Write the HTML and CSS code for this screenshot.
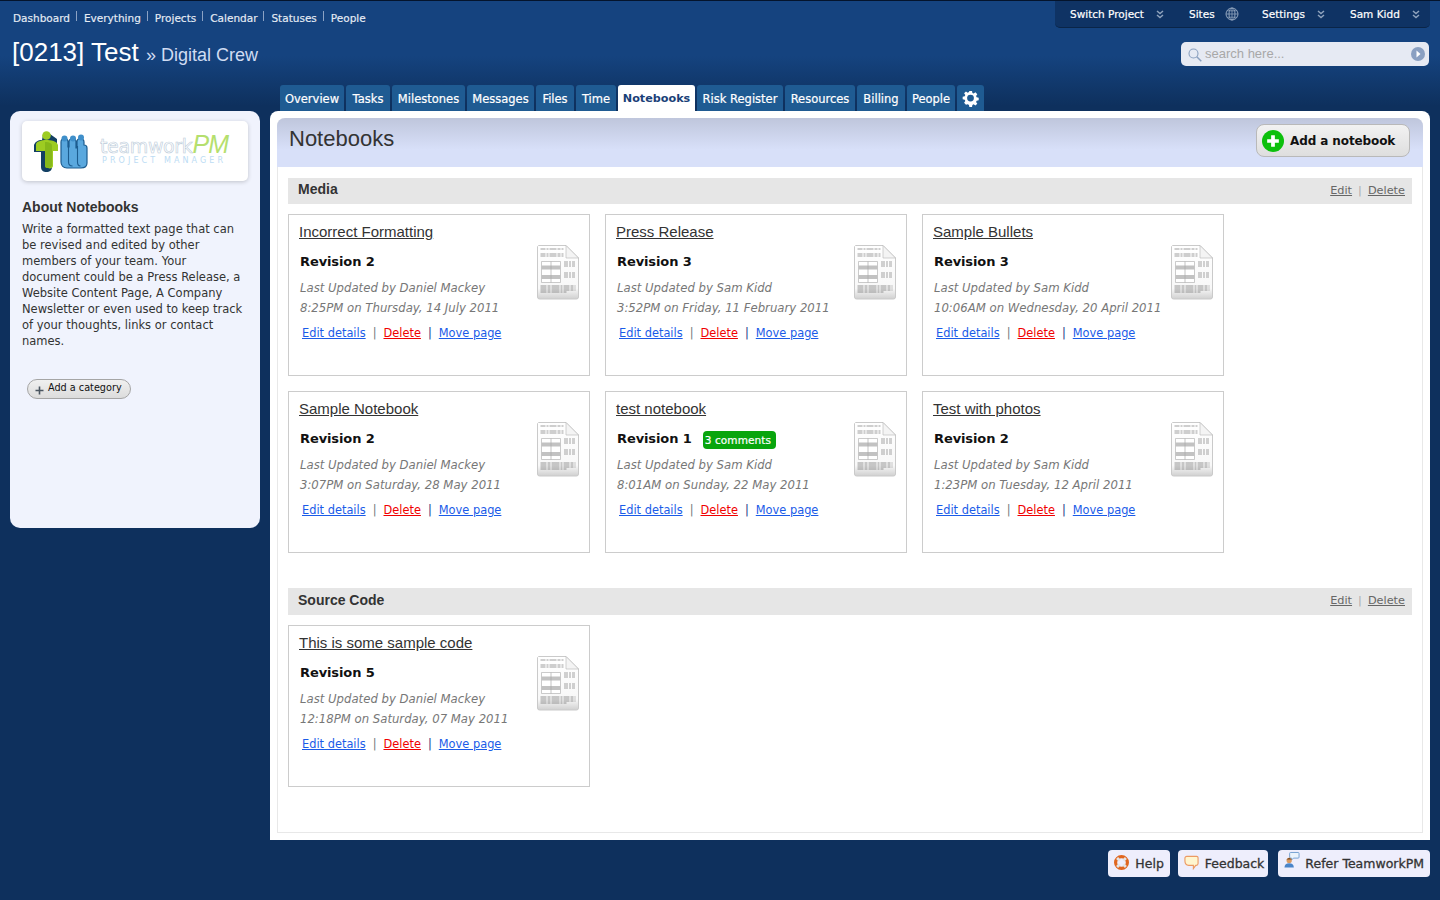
FILE: index.html
```html
<!DOCTYPE html>
<html lang="en">
<head>
<meta charset="utf-8">
<title>Notebooks</title>
<link rel="stylesheet" href="styles.css">
</head>
<body>
<svg class="defs" width="0" height="0" aria-hidden="true">
  <defs>
    <linearGradient id="docg" x1="0" y1="0" x2="0" y2="1"><stop offset="0" stop-color="#fff"/><stop offset=".8" stop-color="#f8f8f8"/><stop offset="1" stop-color="#d0d0d0"/></linearGradient>
    <symbol id="doc" viewBox="0 0 42 55">
      <path d="M1.500 .5H29L41.500 13V52a2 2 0 0 1-2 2H2.500a2 2 0 0 1-2-2V1.500z" fill="url(#docg)" stroke="#cacaca"/>
      <path d="M29 .5V13H41.500z" fill="#f4f4f4" stroke="#b5b5b5" stroke-width=".6"/>
      <path d="M3.500 4h23M3.500 9h23M3.500 11h23" stroke="#777" stroke-width=".7" stroke-dasharray="5 1 2 1 7 1 3 1"/>
      <path d="M27 17h12M27 19h12M27 21h12M27 28h12M27 30h12M27 32h12" stroke="#808080" stroke-width=".7" stroke-dasharray="4 1 2 1 3 1"/>
      <path d="M4.500 16.500h19v21h-19z" fill="#fff" stroke="#b5b5b5" stroke-width=".7"/>
      <path d="M4.500 20.500h19v4h-19zM4.500 30h19v4h-19z" fill="#c2c2c2"/>
      <path d="M14 16.500v21" stroke="#aaa" stroke-width=".7"/>
      <path d="M3.500 41h35M3.500 43h35M3.500 45h35M3.500 47h26" stroke="#6c6c6c" stroke-width=".7" stroke-dasharray="6 1 3 1 8 1 2 1"/>
    </symbol>
    <symbol id="chev" viewBox="0 0 8 9">
      <path d="M1 1l3 2.500L7 1M1 5l3 2.500L7 5" fill="none" stroke="#8fa3bd" stroke-width="1.500"/>
    </symbol>
  </defs>
</svg>

<header class="head">
  <div class="head-top">
    <nav class="topnav">
      <a>Dashboard</a><a>Everything</a><a>Projects</a><a>Calendar</a><a>Statuses</a><a>People</a>
    </nav>
    <div class="account">
      <a class="acc acc-switch">Switch Project<svg class="chev"><use href="#chev"/></svg></a>
      <a class="acc acc-sites">Sites<svg class="globe" viewBox="0 0 14 14"><circle cx="7" cy="7" r="6" fill="none" stroke="#8fa3bd"/><ellipse cx="7" cy="7" rx="3" ry="6" fill="none" stroke="#8fa3bd"/><path d="M1 7h12M2 3.800h10M2 10.200h10M7 1v12" stroke="#8fa3bd" stroke-width=".8"/></svg></a>
      <a class="acc acc-settings">Settings<svg class="chev"><use href="#chev"/></svg></a>
      <a class="acc acc-user">Sam Kidd<svg class="chev"><use href="#chev"/></svg></a>
    </div>
  </div>
  <div class="head-mid">
    <h1 class="project">[0213] Test <span class="client"><span class="raquo">»</span> Digital Crew</span></h1>
    <div class="search">
      <svg class="search-ico" viewBox="0 0 14 14"><circle cx="5.500" cy="5.500" r="4.500" fill="none" stroke="#8aa0bf" stroke-width="1.100"/><path d="M8.800 8.800l4.500 4.500" stroke="#8aa0bf" stroke-width="1.500"/></svg>
      <span class="search-text">search here...</span>
      <span class="search-go"><svg viewBox="0 0 14 14"><path d="M5.500 3.500l4 3.500-4 3.500z" fill="#fff"/></svg></span>
    </div>
  </div>
  <nav class="tabs">
    <a class="tab">Overview</a><a class="tab">Tasks</a><a class="tab">Milestones</a><a class="tab">Messages</a><a class="tab">Files</a><a class="tab">Time</a><a class="tab tab-on">Notebooks</a><a class="tab">Risk Register</a><a class="tab">Resources</a><a class="tab">Billing</a><a class="tab">People</a>
    <a class="tab tab-gear"><svg viewBox="0 0 18 18"><path d="M7.600 1h2.800l.4 2.200 1.300.6 1.900-1.300 2 2-1.300 1.900.6 1.300 2.200.4v2.800l-2.200.4-.6 1.300 1.300 1.900-2 2-1.900-1.300-1.300.6-.4 2.200H7.600l-.4-2.200-1.300-.6L4 15.500l-2-2 1.300-1.900-.6-1.300L.5 9.900V7.100l2.200-.4.6-1.300L2 3.500l2-2 1.900 1.300 1.300-.6z" transform="translate(.2 0)" fill="#fff"/><circle cx="9" cy="8.500" r="3.600" fill="#1f5b92"/></svg></a>
  </nav>
</header>

<div class="layout">
  <aside class="side">
    <div class="logo">
      <svg class="logo-mark" viewBox="0 0 56 42">
        <path d="M9 4a4 4 0 0 1 7-1l7 5v12h-5v16c0 3-2 5-6 5-2 0-5-1-5-5V21H0v-7c1-3 4-5 8-5z" fill="#123f63"/>
        <circle cx="12.500" cy="4.500" r="4.300" fill="#9dcc22"/>
        <path d="M2 13c1-3 6-4 10-4 5 0 11 1 12 5v6h-5v15c0 2-3 3-5 2-2 0-3-1-3-3V20H2z" fill="#9dcc22"/>
        <path d="M11 11v24c0 1 1 2 2 2 3 0 5-1 5-3V15c0-3-3-4-7-4z" fill="#86b81a"/>
        <path d="M27 11a2.500 2.500 0 0 1 7 0v5h1v-5a2.500 2.500 0 0 1 7 0v6h1v-6a2.500 2.500 0 0 1 7 0v3a3 3 0 0 1 3 3v15c0 3-2 5-6 5H33c-4 0-6-3-6-6z" fill="#5aa8de" stroke="#1c5c8f" stroke-width="1.200"/>
        <path d="M34.500 14v17c0 2 1 4 4 4M43.500 15v16c0 2 1 4 3 4" fill="none" stroke="#1c5c8f" stroke-width="1.100"/>
        <circle cx="30.500" cy="7.500" r="3" fill="#3f8fca"/><circle cx="39" cy="7.500" r="3" fill="#3f8fca"/><circle cx="47" cy="6.500" r="3" fill="#3f8fca"/>
      </svg>
      <div class="logo-words">
        <div class="logo-name"><span class="logo-team">teamwork</span><span class="logo-pm">PM</span></div>
        <div class="logo-sub">PROJECT MANAGER</div>
      </div>
    </div>
    <h2 class="about-h">About Notebooks</h2>
    <p class="about">Write a formatted text page that can be revised and edited by other members of your team. Your document could be a Press Release, a Website Content Page, A Company Newsletter or even used to keep track of your thoughts, links or contact names.</p>
    <a class="addcat"><svg viewBox="0 0 9 9"><path d="M4.500 .5v8M.5 4.500h8" stroke="#4a5560" stroke-width="1.600"/></svg><span class="addcat-text">Add a category</span></a>
  </aside>

  <main class="main">
    <div class="panel">
      <div class="titlebar">
        <h2 class="page-title">Notebooks</h2>
        <a class="addbtn"><span class="addbtn-ico"><svg viewBox="0 0 12 12"><path d="M6 1v10M1 6h10" stroke="#fff" stroke-width="3.200"/></svg></span>Add a notebook</a>
      </div>

      <section class="cat">
        <div class="cat-head"><h3>Media</h3><div class="cat-links"><a>Edit</a><span>|</span><a>Delete</a></div></div>
        <div class="cards">
          <article class="card"><div class="card-body"><h4 class="card-title">Incorrect Formatting</h4><div class="rev">Revision 2</div><p class="meta">Last Updated by Daniel Mackey<br>8:25PM on Thursday, 14 July 2011</p><div class="acts"><a class="edit">Edit details</a><span class="s1">|</span><a class="del">Delete</a><span class="s2">|</span><a class="edit">Move page</a></div></div><svg class="doc"><use href="#doc"/></svg></article>
          <article class="card"><div class="card-body"><h4 class="card-title">Press Release</h4><div class="rev">Revision 3</div><p class="meta">Last Updated by Sam Kidd<br>3:52PM on Friday, 11 February 2011</p><div class="acts"><a class="edit">Edit details</a><span class="s1">|</span><a class="del">Delete</a><span class="s2">|</span><a class="edit">Move page</a></div></div><svg class="doc"><use href="#doc"/></svg></article>
          <article class="card"><div class="card-body"><h4 class="card-title">Sample Bullets</h4><div class="rev">Revision 3</div><p class="meta">Last Updated by Sam Kidd<br>10:06AM on Wednesday, 20 April 2011</p><div class="acts"><a class="edit">Edit details</a><span class="s1">|</span><a class="del">Delete</a><span class="s2">|</span><a class="edit">Move page</a></div></div><svg class="doc"><use href="#doc"/></svg></article>
          <article class="card"><div class="card-body"><h4 class="card-title">Sample Notebook</h4><div class="rev">Revision 2</div><p class="meta">Last Updated by Daniel Mackey<br>3:07PM on Saturday, 28 May 2011</p><div class="acts"><a class="edit">Edit details</a><span class="s1">|</span><a class="del">Delete</a><span class="s2">|</span><a class="edit">Move page</a></div></div><svg class="doc"><use href="#doc"/></svg></article>
          <article class="card"><div class="card-body"><h4 class="card-title">test notebook</h4><div class="rev">Revision 1<span class="badge">3 comments</span></div><p class="meta">Last Updated by Sam Kidd<br>8:01AM on Sunday, 22 May 2011</p><div class="acts"><a class="edit">Edit details</a><span class="s1">|</span><a class="del">Delete</a><span class="s2">|</span><a class="edit">Move page</a></div></div><svg class="doc"><use href="#doc"/></svg></article>
          <article class="card"><div class="card-body"><h4 class="card-title">Test with photos</h4><div class="rev">Revision 2</div><p class="meta">Last Updated by Sam Kidd<br>1:23PM on Tuesday, 12 April 2011</p><div class="acts"><a class="edit">Edit details</a><span class="s1">|</span><a class="del">Delete</a><span class="s2">|</span><a class="edit">Move page</a></div></div><svg class="doc"><use href="#doc"/></svg></article>
        </div>
      </section>

      <section class="cat cat-2">
        <div class="cat-head"><h3>Source Code</h3><div class="cat-links"><a>Edit</a><span>|</span><a>Delete</a></div></div>
        <div class="cards">
          <article class="card"><div class="card-body"><h4 class="card-title">This is some sample code</h4><div class="rev">Revision 5</div><p class="meta">Last Updated by Daniel Mackey<br>12:18PM on Saturday, 07 May 2011</p><div class="acts"><a class="edit">Edit details</a><span class="s1">|</span><a class="del">Delete</a><span class="s2">|</span><a class="edit">Move page</a></div></div><svg class="doc"><use href="#doc"/></svg></article>
        </div>
      </section>
    </div>
  </main>
</div>

<footer class="foot">
  <a class="fbtn"><svg viewBox="0 0 16 16"><circle cx="8" cy="8" r="6.300" fill="none" stroke="#e0661f" stroke-width="3.400"/><path d="M3.300 3.300l2.700 2.700M12.700 3.300L10 6M3.300 12.700L6 10M12.700 12.700L10 10" stroke="#e4e4e4" stroke-width="3"/></svg>Help</a>
  <a class="fbtn fbtn-feed"><svg viewBox="0 0 16 16"><path d="M3 1.500h10.500A1.500 1.500 0 0 1 15 3v6c0 1.500-1 2-2 2h-.5L10 14.500V11H5C2.500 11 1 9 1 6.500V3.500a2 2 0 0 1 2-2z" fill="#fff6cf" stroke="#ec9a63" stroke-width="1.200"/></svg>Feedback</a>
  <a class="fbtn fbtn-refer"><svg viewBox="0 0 17 18"><path d="M7 1h8a1 1 0 0 1 1 1v4a1 1 0 0 1-1 1h-5l-2 2V7H7a1 1 0 0 1-1-1V2a1 1 0 0 1 1-1z" fill="#eaf3fc" stroke="#6f9ed0"/><circle cx="5.500" cy="9.500" r="2.800" fill="#d99a62"/><path d="M2.500 8.500l3-2 3 2z" fill="#7a4a20"/><path d="M.5 17c0-3 2-4.500 5-4.500s5 1.500 5 4.500z" fill="#4a84c8"/></svg>Refer TeamworkPM</a>
</footer>
</body>
</html>
```

FILE: styles.css
```css
* { box-sizing: border-box; }
html, body { margin: 0; padding: 0; }
body {
  height: 900px;
  overflow: hidden;
  background: #0e305d;
  font-family: "DejaVu Sans", sans-serif;
  font-size: 12px;
  color: #333;
}
a { cursor: pointer; }
.defs { display: block; height: 0; }

.head {
  height: 111px;
  border-top: 1px solid #04142c;
  background: linear-gradient(#15437f 0, #15437f 55px, #0e305d 105px);
  display: flex;
  flex-direction: column;
}
.head-top { display: flex; justify-content: space-between; padding: 0 10px 0 13px; height: 40px; }
.topnav { display: flex; padding-top: 11px; font-size: 10.5px; color: #e6ecf5; -webkit-text-stroke: .15px #e6ecf5; }
.topnav a { line-height: 13px; padding-right: 7px; margin-right: 7px; position: relative; }
.topnav a:last-child { padding-right: 0; margin-right: 0; }
.topnav a:not(:last-child)::after {
  content: ""; position: absolute; right: 0; top: -1px; width: 1px; height: 10px; background: #8ba2c4;
}
.account {
  width: 375px; height: 27px;
  background: #0f3364;
  border-bottom: 1px solid #0a2548;
  border-radius: 0 0 5px 5px;
  display: flex; align-items: center;
  color: #fff; font-size: 10.5px; -webkit-text-stroke: .2px #fff;
  padding-left: 15px;
}
.acc { display: flex; align-items: center; }
.chev { width: 8px; height: 9px; margin-left: 12px; }
.acc-switch { width: 119px; }
.acc-sites { width: 73px; }
.acc-settings { width: 88px; }
.globe { width: 14px; height: 14px; margin-left: 10px; }

.head-mid { display: flex; justify-content: space-between; align-items: flex-start; padding: 0 11px 0 12px; height: 44px; }
.project {
  margin: -5px 0 0; font: 400 26px/32px "Liberation Sans", sans-serif; color: #fff;
}
.client { font-size: 18px; color: #d0dcf2; }
.raquo { font-size: 18px; }
.search {
  width: 248px; height: 24px; margin-top: 1px;
  background: #e6eaf3; border-radius: 5px;
  display: flex; align-items: center; padding: 0 4px 0 7px;
  font: 13px/22px "Liberation Sans", sans-serif; color: #a8a8a8;
}
.search-ico { width: 14px; height: 14px; margin-right: 3px; flex: none; margin-top: 1px; }
.search-text { flex: 1; margin-top: -1px; }
.search-go { width: 14px; height: 14px; border-radius: 50%; background: #8aa0c2; display: block; }
.search-go svg { display: block; width: 14px; height: 14px; }

.tabs {
  display: grid; gap: 2px; height: 26px; margin-top: auto; margin-left: 280px;
  grid-template-columns: 64px 44px 73px 67px 38px 40px 77px 86px 70px 48px 48px 27px;
}
.tab {
  height: 26px; line-height: 28px; font-size: 11.500px; text-align: center; white-space: nowrap;
  background: #1f5b92; color: #fff; border-radius: 3px 3px 0 0; -webkit-text-stroke: .2px #fff;
}
.tab-on { background: #fff; color: #1a3f78; -webkit-text-stroke: 0; font-size: 11.200px; font-weight: 700; }
.tab-gear { padding: 5px 5px 0; }
.tab-gear svg { display: block; width: 17px; height: 17px; }

.layout { display: flex; height: 729px; padding-left: 10px; gap: 10px; }
.side {
  width: 250px; height: 417px;
  background: #f0f3fd;
  border-radius: 10px;
  padding: 10px 12px;
}
.logo {
  height: 60px; background: #fff; border-radius: 5px;
  box-shadow: 0 1px 4px rgba(0,0,0,.2);
  display: flex; align-items: center; padding-left: 12px;
}
.logo-mark { width: 56px; height: 42px; flex: none; margin-top: 1px; }
.logo-words { margin: -3px 0 0 10px; }
.logo-name { display: flex; align-items: baseline; height: 22px; line-height: 22px; }
.logo-team { font: 19px/22px "DejaVu Sans", sans-serif; color: #fff; -webkit-text-stroke: .6px #bcccda; letter-spacing: -.35px; }
.logo-pm { font: italic 25px/22px "Liberation Sans", sans-serif; color: #b5df6e; letter-spacing: -1px; }
.logo-sub { font-size: 8px; line-height: 10px; letter-spacing: 3.100px; color: #bcdcf4; margin: 1px 0 0 2px; white-space: nowrap; }
.about-h { margin: 18px 0 0; font: 700 14px/17px "Liberation Sans", sans-serif; color: #333; }
.about { margin: 5px 0 0; font-size: 11.500px; line-height: 16px; color: #333; width: 222px; }
.addcat {
  display: flex; align-items: center; width: 104px; height: 20px;
  margin: 30px 0 0 5px; padding-left: 7px;
  border: 1px solid #a5a5a5; border-radius: 10px;
  background: linear-gradient(#f0f0f0, #dcdcdc);
  font-size: 9.700px; color: #111;
}
.addcat svg { width: 9px; height: 9px; margin: 2px 4px 0 0; }
.addcat-text { margin-top: -3px; }

.main { width: 1160px; height: 729px; background: #fff; border-radius: 8px 8px 0 0; padding: 7px; }
.panel {
  height: 715px; border: 1px solid #e8e8e8; border-top: 0; border-radius: 8px 8px 0 0;
  padding: 0 10px;
}
.titlebar {
  margin: 0 -11px; height: 49px;
  background: linear-gradient(#bfc6dc, #d8e0f9 65%);
  border-radius: 8px 8px 0 0;
  display: flex; justify-content: space-between; align-items: flex-start;
  padding: 6px 13px 0 12px;
}
.page-title { margin: 1px 0 0; font: 400 22px/28px "Liberation Sans", sans-serif; color: #333; }
.addbtn {
  width: 154px; height: 33px;
  border: 1px solid #b9b9b9; border-radius: 8px;
  background: linear-gradient(#f2f2f2, #dedede);
  display: flex; align-items: center; padding-left: 5px;
  font-size: 12px; font-weight: 700; letter-spacing: -.1px; color: #111;
}
.addbtn-ico { width: 22px; height: 22px; border-radius: 50%; background: #0cc00c; margin-right: 6px; display: block; padding: 4px; }
.addbtn-ico svg { display: block; width: 14px; height: 14px; }

.cat { padding-top: 11px; }
.cat-2 { padding-top: 35px; }
.cat-head {
  height: 26px; background: #e6e6e6;
  display: flex; justify-content: space-between; align-items: center;
  padding: 0 7px 0 10px;
}
.cat-2 .cat-head { height: 27px; }
.cat-head h3 { margin: -3px 0 0; font: 700 14px/17px "Liberation Sans", sans-serif; color: #333; }
.cat-2 .cat-head h3 { margin-top: -2px; }
.cat-links { display: flex; gap: 6px; margin-top: -2px; font-size: 11.300px; color: #666; }
.cat-links a { text-decoration: underline; }
.cat-links span { color: #aaa; }

.cards { display: grid; grid-template-columns: repeat(3, 302px); gap: 15px; padding-top: 10px; }
.card {
  height: 162px; border: 1px solid #ccc; background: #fff;
  padding: 7px 10px 0 10px;
  display: flex; justify-content: space-between;
}
.card-title { margin: 0; font: 400 15px/20px "Liberation Sans", sans-serif; color: #333; text-decoration: underline; }
.rev { margin: 11px 0 0 1px; height: 18px; font-size: 13px; line-height: 18px; font-weight: 700; letter-spacing: -.1px; color: #111; display: flex; align-items: center; white-space: nowrap; }
.badge {
  margin: 1px 0 0 11px; height: 18px; padding: 0 5px 0 2px; border-radius: 4px; background: #09a50d;
  font-size: 10.500px; font-weight: 400; line-height: 18px; color: #fff; letter-spacing: .1px; -webkit-text-stroke: .2px #fff;
}
.meta { margin: 7px 0 0 1px; font-size: 11.700px; font-style: italic; line-height: 20px; color: #777; white-space: nowrap; }
.acts { margin: 5px 0 0 3px; display: flex; font-size: 11.400px; line-height: 20px; white-space: nowrap; }
.acts a { text-decoration: underline; }
.edit { color: #1a5be8; }
.del { color: #f00000; }
.acts span { margin: 0 7px; }
.s1 { color: #777; }
.s2 { color: #1a2f80; }
.doc { width: 42px; height: 55px; flex: none; margin-top: 23px; }

.foot { display: flex; justify-content: flex-end; gap: 8px; padding: 10px 10px 0 0; }
.fbtn {
  height: 27px; background: #eeeefc; border-radius: 4px;
  display: flex; align-items: center; padding: 0 6px;
  font-size: 12.500px; color: #333; -webkit-text-stroke: .3px #333;
}
.fbtn svg { width: 15px; height: 15px; margin-right: 6px; margin-top: -3px; }
.fbtn-feed { margin-right: 2px; padding-right: 4px; }
.fbtn-refer svg { width: 16px; height: 18px; margin-right: 5px; margin-top: -7px; }
```
